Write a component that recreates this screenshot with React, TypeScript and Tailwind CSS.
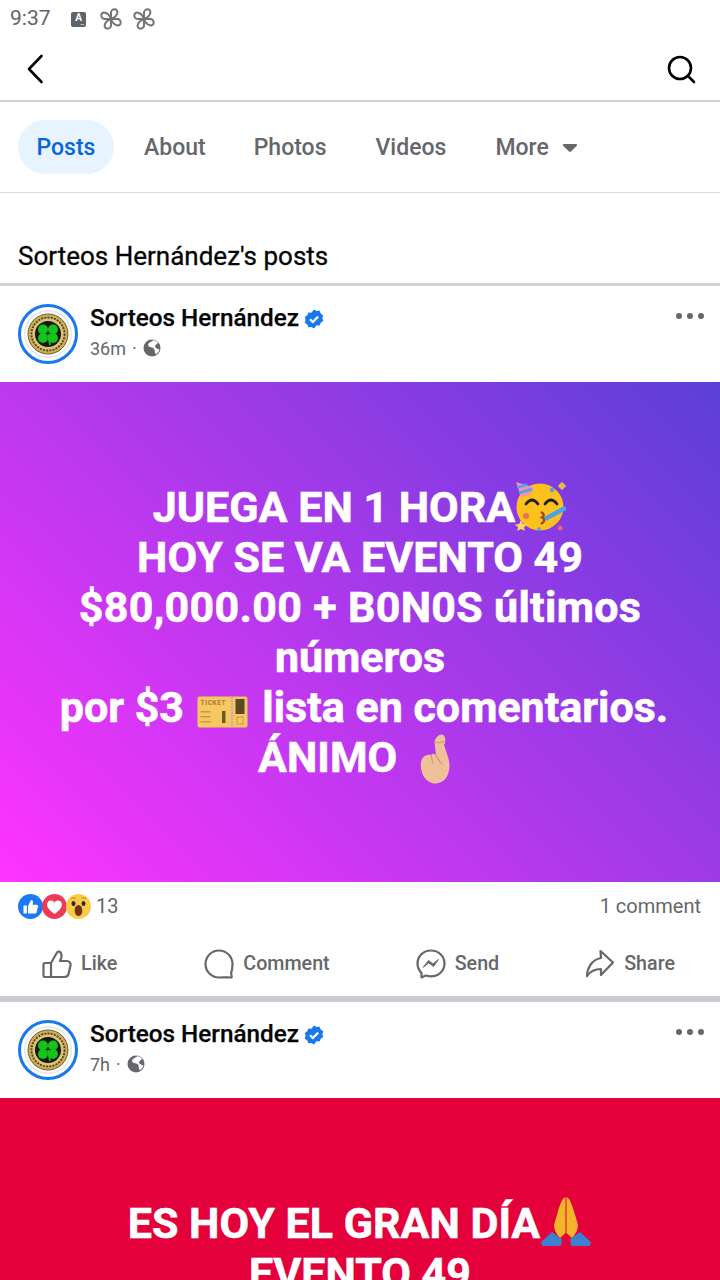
import { ReactNode } from 'react';

const petal = 'M11 11V4.500C11 2.500 12.800 1.300 14.500 1.300C16.500 1.300 17.800 3 17.300 5C16.700 7.500 14 10 11 11Z';

const Pinwheel = () => (
  <svg width="22" height="22" viewBox="0 0 22 22" fill="none" stroke="#70757a" strokeWidth="2" strokeLinejoin="round">
    <path d={petal} />
    <path d={petal} transform="rotate(90 11 11)" />
    <path d={petal} transform="rotate(180 11 11)" />
    <path d={petal} transform="rotate(270 11 11)" />
  </svg>
);

const StatusBar = () => (
  <div className="h-[40px] pb-[2px] flex items-center pl-[10px]">
    <span className="text-[21px] text-[#5f6368] w-[61px]">9:37</span>
    <div className="relative w-[15px] h-[15px] bg-[#5f6368] rounded-[2px] flex items-center justify-center text-white text-[10px] font-bold leading-none pb-[2px]">
      A
      <span className="absolute right-[2px] bottom-[1px] text-[6px] leading-none tracking-[-0.5px]">...</span>
    </div>
    <div className="ml-[14px]"><Pinwheel /></div>
    <div className="ml-[11px]"><Pinwheel /></div>
  </div>
);

const Header = () => (
  <div className="h-[62px] pb-[3px] flex items-center justify-between px-[26px] border-b-2 border-[#d0d2d6]">
    <svg width="18" height="30" viewBox="0 0 18 30" fill="none" stroke="#000" strokeWidth="2.6" strokeLinecap="round" strokeLinejoin="round">
      <path d="M15.5 2L3 15L15.5 28" />
    </svg>
    <svg className="-mr-[2px]" width="30" height="30" viewBox="0 0 30 30" fill="none" stroke="#000" strokeWidth="2.6" strokeLinecap="round">
      <circle cx="14" cy="14" r="11" />
      <path d="M22 22L28 28" />
    </svg>
  </div>
);

const Tabs = () => (
  <div className="h-[91px] flex items-center pl-[18px] border-b border-[#d8dade] text-[23px] font-medium text-[#65676b]">
    <div className="h-[54px] w-[96px] rounded-full bg-[#e7f3ff] text-[#0a66d8] flex items-center justify-center pt-[2px]">Posts</div>
    <span className="ml-[30px] pt-[2px]">About</span>
    <span className="ml-[48px] pt-[2px]">Photos</span>
    <span className="ml-[49px] pt-[2px]">Videos</span>
    <span className="ml-[49px] pt-[2px]">More</span>
    <svg className="ml-[13px] mt-[2px]" width="16" height="10" viewBox="0 0 16 10" fill="#65676b">
      <path d="M2 1H14C15 1 15.4 2 14.8 2.8L9 8.6C8.4 9.2 7.6 9.2 7 8.6L1.2 2.8C.6 2 1 1 2 1Z" />
    </svg>
  </div>
);

const Avatar = () => (
  <div className="w-[60px] h-[60px] rounded-full border-[3px] border-[#1877f2] bg-white flex items-center justify-center">
    <svg width="50" height="50" viewBox="0 0 50 50">
      <circle cx="25" cy="25" r="24" fill="#e6e6e6" />
      <circle cx="25" cy="25" r="22.500" fill="#fff" />
      <circle cx="25" cy="25" r="20" fill="#cdae55" stroke="#6f5d2a" strokeWidth="1" />
      <circle cx="25" cy="25" r="16.500" fill="#dcc273" stroke="#4a4126" strokeWidth="1.800" strokeDasharray="2 1.200" />
      <circle cx="25" cy="25" r="13" fill="#17170f" />
      <circle cx="20" cy="20.500" r="5" fill="#13c41a" />
      <circle cx="30" cy="20.500" r="5" fill="#13c41a" />
      <circle cx="20" cy="29" r="5" fill="#13c41a" />
      <circle cx="30" cy="29" r="5" fill="#13c41a" />
      <path d="M25 25L27 36" stroke="#13c41a" strokeWidth="1.800" />
    </svg>
  </div>
);

const Verified = () => (
  <svg width="20" height="20" viewBox="0 0 20 20">
    <path fill="#1877f2" d="M10 .5l2.6 1.6 3-.3 1.1 2.8 2.5 1.7-.8 2.900.8 2.900-2.500 1.700-1.100 2.800-3-.3L10 19.500l-2.600-1.600-3 .3-1.100-2.800L.8 13.700l.8-2.900-.8-2.900 2.500-1.700 1.100-2.800 3 .3z" />
    <path d="M6 10.200l2.800 2.800L14.200 7.600" fill="none" stroke="#fff" strokeWidth="2.200" />
  </svg>
);

const Globe = () => (
  <svg width="18" height="18" viewBox="0 0 18 18">
    <circle cx="9" cy="9" r="8.500" fill="#65676b" />
    <path fill="#fff" d="M10.500 1.200C9 2.500 7 3 5.500 4.500 4.500 6 5.500 7.500 7 8c1.500.5 3 .5 4 1.500 1 1.200.5 3 1 4.500.3.800 1 1.200 1.500 1 1.500-1.200 2.500-3 3-4.500-1-.5-2.500-.5-3.500-1.500-1.200-1-1-2.500 0-3.500.6-.6 1.500-1 2-1.500C14.200 2.500 12.500 1.500 10.500 1.200z" />
  </svg>
);

const PostHeader = ({ time }: { time: string }) => (
  <div className="h-[96px] flex pl-[18px] pr-[16px] pt-[18px] relative">
    <Avatar />
    <div className="ml-[12px]">
      <div className="flex items-center h-[28px]">
        <span className="text-[24.300px] font-medium text-[#050505] [-webkit-text-stroke:0.25px_#050505]">Sorteos Hernández</span>
        <span className="ml-[5px] mt-[2px]"><Verified /></span>
      </div>
      <div className="flex items-center h-[32px] text-[18px] text-[#65676b]">
        <span>{time}</span>
        <span className="mx-[6px]">·</span>
        <Globe />
      </div>
    </div>
    <div className="absolute right-[16px] top-[27px] flex gap-[5px]">
      <span className="w-[6px] h-[6px] rounded-full bg-[#65676b]" />
      <span className="w-[6px] h-[6px] rounded-full bg-[#65676b]" />
      <span className="w-[6px] h-[6px] rounded-full bg-[#65676b]" />
    </div>
  </div>
);

const PartyFace = () => (
  <svg className="inline-block align-[-9px]" width="52" height="50" viewBox="0 0 52 50">
    <circle cx="25" cy="26" r="23.500" fill="#fcc21b" />
    <path d="M1 1L18 6C19.500 10 15 15 6 16Z" fill="#f48fb1" />
    <path d="M2.500 6.500L12 3.500M4 12L17 8" stroke="#4aa3e8" strokeWidth="2.400" />
    <path d="M11 23Q17 15 23 23M30 23Q36 15 42 23" fill="none" stroke="#222" strokeWidth="2.800" strokeLinecap="round" />
    <path d="M26 31Q31 34 27 36.500Q32 39 26 43" fill="none" stroke="#a3461b" strokeWidth="2.400" />
    <path d="M29 36L49 25C51 25 52 28 50.500 29.500L31 40Z" fill="#4aa3e8" />
    <circle cx="11" cy="35" r="3" fill="#ef6c6c" />
    <path d="M6 39l1.800 4 4.200.5-3 2.800.8 3.700-3.800-2-3.800 2 .8-3.700-3-2.800 4.200-.5z" fill="#f4d95f" />
    <rect x="44" y="2" width="6" height="6" rx="1" fill="#e8b45c" transform="rotate(45 47 5)" />
    <circle cx="45" cy="47" r="2.500" fill="#ef5b7a" />
    <circle cx="37" cy="9" r="2.200" fill="#4aa3e8" />
    <circle cx="24" cy="48" r="1.800" fill="#4aa3e8" />
  </svg>
);

const TicketEmoji = () => (
  <svg className="inline-block align-[-6px] ml-[2px] mr-[4px]" width="51" height="32" viewBox="0 0 51 32">
    <rect x="0.500" y="0.500" width="50" height="31" rx="2" fill="#f5c862" />
    <path d="M35 1V31" stroke="#d98fd0" strokeWidth="1.600" strokeDasharray="2 1" />
    <text x="3.500" y="9" fontFamily="Roboto, sans-serif" fontSize="6.500" fontWeight="700" letterSpacing="0.600" fill="#b5762f">TICKET</text>
    <rect x="38.500" y="3" width="9" height="15" fill="#5d4a22" />
    <rect x="3.500" y="15" width="10" height="1.500" fill="#c99a45" />
    <rect x="3.500" y="20" width="10" height="1.500" fill="#c99a45" />
    <rect x="3.500" y="25" width="10" height="1.500" fill="#c99a45" />
    <rect x="25" y="15" width="3.500" height="12" fill="#6d5a2a" />
    <rect x="40" y="21" width="6" height="7" fill="none" stroke="#c99a45" strokeWidth="1" />
  </svg>
);

const CrossedFingers = () => (
  <svg className="inline-block align-[-12px] ml-[10px] mr-[10px]" width="34" height="50" viewBox="0 0 34 50">
    <path fill="#efc19a" d="M23.500.5C21 .5 17 4 16.500 8L18 21C16 19 14 19.500 13 21C10 20.500 6 21 4 25C1.500 30 3 38 6 43C9 47 13 49.500 17 49.500C23 49.500 28 46 30 40C32 34 32 29 30 23L26 11C28 8 28 .5 23.500 .5Z" />
    <path d="M17 8C20 9 23 9 26 7M13 21C14 25 14 27 15 29M18 21C20 26 22 29 25 30" fill="none" stroke="#d29b70" strokeWidth="1.300" />
  </svg>
);

const PrayEmoji = () => (
  <svg className="inline-block align-[-9px]" width="52" height="50" viewBox="0 0 52 50">
    <path d="M25.500 0C22 1 20 8 18 14L14 28C14 32 16 37 20 41L25.500 36ZM26.500 0C30 1 32 8 34 14L38 28C38 32 36 37 32 41L26.500 36Z" fill="#f5b52b" />
    <path d="M12 35L1 45L2 49H21L22 42ZM40 35L51 45L50 49H31L30 42Z" fill="#3f7fd0" />
  </svg>
);

const ReactionIcons = () => (
  <div className="flex">
    <svg width="25" height="25" viewBox="0 0 25 25" className="relative">
      <circle cx="12.500" cy="12.500" r="12.500" fill="#1b78f2" />
      <path fill="#fff" d="M5.500 11.500h3.400v8H5.500zM10 12l3-6c1.600 0 2.400 1.200 2 3l-.4 1.800h4c1.200 0 1.600 1 1.400 1.800l-1.400 5.600c-.2.800-.8 1.300-1.600 1.300h-7z" />
    </svg>
    <svg width="25" height="25" viewBox="0 0 25 25" className="-ml-[1px] relative">
      <circle cx="12.500" cy="12.500" r="12.500" fill="#ef3a55" />
      <path fill="#fff" d="M12.500 20C6.500 15.500 5.100 13.100 5.100 10.500c0-2.400 1.800-4 3.900-4 1.500 0 2.800.8 3.500 2.200.7-1.400 2-2.200 3.500-2.200 2.100 0 3.900 1.600 3.900 4 0 2.600-1.400 5-7.400 9.500z" />
    </svg>
    <svg width="25" height="25" viewBox="0 0 25 25" className="-ml-[1px] relative">
      <circle cx="12.500" cy="12.500" r="12.500" fill="#fbcb45" />
      <ellipse cx="7.500" cy="9.500" rx="2" ry="2.600" fill="#2b2b3a" />
      <ellipse cx="17.500" cy="9.500" rx="2" ry="2.600" fill="#2b2b3a" />
      <path d="M5 5Q7.500 3 9.500 4.500M15.500 4.500Q17.500 3 20 5" fill="none" stroke="#d98a2b" strokeWidth="1.200" />
      <ellipse cx="12.500" cy="16.500" rx="3.800" ry="5.500" fill="#6d3312" />
    </svg>
  </div>
);

const ActionButton = ({ icon, label, className }: { icon: ReactNode; label: string; className: string }) => (
  <div className={`flex items-center gap-[9px] text-[19.700px] font-medium text-[#65676b] ${className}`}>
    {icon}
    <span>{label}</span>
  </div>
);

const stroke = { fill: 'none', stroke: '#65676b', strokeWidth: 2.2, strokeLinejoin: 'round' as const, strokeLinecap: 'round' as const };

const Actions = () => (
  <div className="h-[64px] flex items-center">
    <ActionButton
      className="ml-[42px]"
      label="Like"
      icon={
        <svg width="30" height="30" viewBox="0 0 30 30" {...stroke}>
          <path d="M9 28V14L15 3.500C15.500 2 19 2 19.500 5.500C20 8 19 10 18 12H25C27.500 12 29 14 28.500 16.500L26.500 25C26 27 24.500 28 22.500 28H3C2 28 1.500 27.500 1.500 26.500V15.500C1.500 14.500 2 14 3 14H9" />
        </svg>
      }
    />
    <ActionButton
      className="ml-[87px]"
      label="Comment"
      icon={
        <svg width="30" height="30" viewBox="0 0 30 30" {...stroke}>
          <path d="M15 1.500C7.500 1.500 1.500 7.500 1.500 15S7.500 28.500 15 28.500C18 28.500 24 28 27.500 28.500C28 28.500 27.500 25.500 27 24.500C28 22 28.500 18 28.500 15C28.500 7.500 22.500 1.500 15 1.500Z" />
        </svg>
      }
    />
    <ActionButton
      className="ml-[86px]"
      label="Send"
      icon={
        <svg width="30" height="30" viewBox="0 0 30 30" {...stroke}>
          <path d="M15 1.500C7.500 1.500 1.500 7 1.500 14.500C1.500 18.500 3 21.500 5.500 24V28.500L9.800 26.500C11.500 27 13 27.300 15 27.300C22.500 27.300 28.500 22 28.500 14.500S22.500 1.500 15 1.500Z" />
          <path d="M7.500 18L12.500 11.500L17 15L22.500 10.500L17.500 17.500L13 14Z" fill="#65676b" strokeWidth="1" />
        </svg>
      }
    />
    <ActionButton
      className="ml-[86px]"
      label="Share"
      icon={
        <svg width="30" height="30" viewBox="0 0 30 30" {...stroke}>
          <path d="M15.500 2L28 13.500L16 26V20C10 20 5.500 22 2 27C2 20 6.500 10.500 16 9Z" />
        </svg>
      }
    />
  </div>
);

export default function App() {
  return (
    <div className="w-[720px] h-[1280px] overflow-hidden bg-white font-['Roboto',sans-serif]">
      <StatusBar />
      <Header />
      <Tabs />
      <div className="h-[93px] border-b-[3px] border-[#ced0d4] flex items-end pb-[11px] pl-[18px]">
        <span className="text-[26px] leading-[32px] font-normal text-[#050505] [-webkit-text-stroke:0.3px_#050505]">Sorteos Hernández's posts</span>
      </div>
      <PostHeader time="36m" />
      <div className="h-[500px] bg-[linear-gradient(45deg,#ff33ff_0%,#5b3fd8_100%)] flex items-center justify-center text-center text-white font-bold text-[43px] leading-[50px] [-webkit-text-stroke:0.6px_#fff]">
        <div>
          JUEGA EN 1 HORA<PartyFace /><br />
          HOY SE VA EVENTO 49<br />
          <span className="tracking-[0.3px]">$80,000.00 + B0N0S últimos</span><br />
          números<br />
          <span className="ml-[8px]">por $3 <TicketEmoji /> lista en comentarios.</span><br />
          ÁNIMO <CrossedFingers />
        </div>
      </div>
      <div className="h-[50px] pb-[2px] flex items-center justify-between pl-[18px] pr-[19px]">
        <div className="flex items-center gap-[5px] text-[20px] text-[#65676b]">
          <ReactionIcons />
          <span>13</span>
        </div>
        <span className="text-[20px] text-[#65676b]">1 comment</span>
      </div>
      <Actions />
      <div className="h-[6px] bg-[#c9ccd1]" />
      <PostHeader time="7h" />
      <div className="h-[300px] bg-[#e4003a] text-center text-white font-bold text-[43px] leading-[50px] pt-[99px] [-webkit-text-stroke:0.6px_#fff]">
        ES HOY EL GRAN DÍA<PrayEmoji /><br />
        EVENTO 49
      </div>
    </div>
  );
}
